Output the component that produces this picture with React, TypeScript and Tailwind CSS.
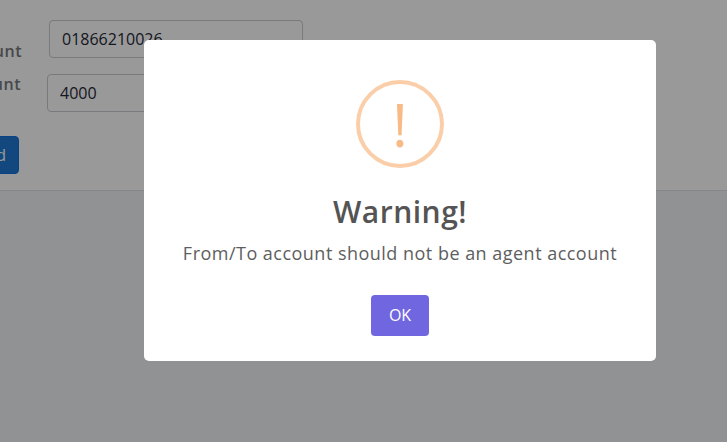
import React from "react";

interface FieldProps {
  label: string;
  value: string;
  labelClass: string;
  inputClass: string;
}

function Field({ label, value, labelClass, inputClass }: FieldProps) {
  return (
    <div className="flex h-[38px] items-start">
      <div className={`flex shrink-0 justify-end overflow-hidden whitespace-nowrap text-base leading-6 font-semibold tracking-[0.5px] text-[#76797e] ${labelClass}`}>
        {label}
      </div>
      <div className={`h-[38px] w-[254px] shrink-0 rounded border border-[#c8cbd3] pl-3 text-base leading-9 text-[#1f2937] ${inputClass}`}>
        {value}
      </div>
    </div>
  );
}

function WarningDialog() {
  return (
    <div className="fixed inset-0 bg-black/40 pt-10 pl-36">
      <div role="dialog" className="flex h-[321px] w-[512px] flex-col items-center rounded-[5px] bg-white pt-10">
        <div className="flex size-[88px] items-center justify-center rounded-full border-4 border-[#facea8]">
          <span className="text-[60px] leading-[80px] text-[#f8bb86]">!</span>
        </div>
        <h2 className="mt-[22px] text-[30px] leading-[44px] font-semibold tracking-[0.5px] text-[#545454]">Warning!</h2>
        <p className="mt-1.5 text-lg leading-[27px] tracking-[0.48px] whitespace-nowrap text-[#5e5e5e]">
          From/To account should not be an agent account
        </p>
        <button className="mt-7 h-[41px] w-[58px] rounded bg-[#7066e0] pb-0.5 text-base text-white">OK</button>
      </div>
    </div>
  );
}

export default function App() {
  return (
    <div className="h-[442px] w-[727px] overflow-hidden bg-[#f0f3f5] font-['Open_Sans',sans-serif]">
      <div className="flex h-[191px] flex-col border-b border-[#dcdfe1] bg-white pt-5">
        <Field label="To Account" value="01866210026" labelClass="w-[22px] pt-[19px] h-[44px]" inputClass="ml-[27px]" />
        <div className="mt-4">
          <Field label="Amount" value="4000" labelClass="-mt-0.5 w-[21px]" inputClass="ml-[26px]" />
        </div>
        <div className="mt-6 flex w-[19px] justify-end overflow-hidden">
          <button className="h-[38px] shrink-0 rounded border border-[#1170de] bg-[#1e78d2] px-3 text-base text-white">Send</button>
        </div>
      </div>
      <WarningDialog />
    </div>
  );
}
